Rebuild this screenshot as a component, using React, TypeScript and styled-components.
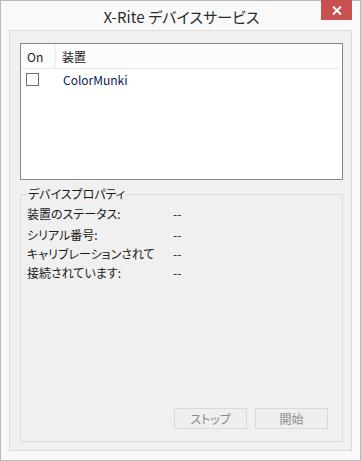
import React from "react";
import styled, { createGlobalStyle } from "styled-components";

const Global = createGlobalStyle`
  html, body { margin: 0; padding: 0; background: #ffffff; }
  body {
    font-family: "Noto Sans CJK JP", "Noto Sans", sans-serif;
    font-feature-settings: "palt";
  }
`;

const Window = styled.div`
  width: 361px;
  height: 461px;
  box-sizing: border-box;
  border: 1px solid #b9b9b9;
  background: #f9f9f9;
  display: flex;
  flex-direction: column;
  padding: 0 8px 9px 8px;
`;

const TitleBar = styled.div`
  height: 29px;
  display: grid;
  grid-template-columns: 1fr auto 1fr;
  align-items: start;
`;

const Title = styled.div`
  font-size: 15px;
  color: #2b2b2b;
  line-height: 30px;
  margin-top: 1px;
  padding-left: 2px;
  letter-spacing: 0.1px;
`;

const CloseButton = styled.div`
  justify-self: end;
  width: 31px;
  height: 20px;
  margin-top: -1px;
  background: #c75050;
  display: flex;
  align-items: center;
  justify-content: center;
`;

const Client = styled.div`
  flex: 1;
  border: 1px solid #d9d9d9;
  background: #f0f0f0;
  display: flex;
  flex-direction: column;
  padding: 12px 8px 8px 10px;
`;

const ListView = styled.div`
  height: 137px;
  box-sizing: border-box;
  border: 1px solid #85878c;
  background: #ffffff;
  display: flex;
  flex-direction: column;
`;

const HeaderRow = styled.div`
  height: 24px;
  display: flex;
  background: #fcfcfc;
  border-bottom: 1px solid #e6ecf6;
  margin-right: 2px;
  font-size: 12px;
  color: #1a1a1a;
`;

const HeaderCell = styled.div<{ $w?: number }>`
  ${(p) => (p.$w ? `width: ${p.$w}px;` : "flex: 1;")}
  box-sizing: border-box;
  padding-left: 6px;
  display: flex;
  align-items: center;
  ${(p) => (p.$w ? "border-right: 1px solid #e6ecf6;" : "")}
`;

const ItemRow = styled.div`
  height: 20px;
  display: flex;
  align-items: center;
  font-size: 12px;
  color: #0b1a5a;
`;

const CheckCell = styled.div`
  width: 35px;
  padding-left: 5px;
  box-sizing: border-box;
  display: flex;
  align-items: center;
`;

const CheckBox = styled.div`
  width: 13px;
  height: 13px;
  box-sizing: border-box;
  border: 1px solid #707070;
  background: #ffffff;
`;

const ItemText = styled.div`
  padding-left: 7px;
`;

const Group = styled.div`
  margin-top: 14px;
  flex: 1;
  position: relative;
  border: 1px solid #dcdcdc;
  display: flex;
  flex-direction: column;
  padding: 8px 6px 12px 6px;
`;

const GroupLabel = styled.div`
  position: absolute;
  top: -10px;
  left: 6px;
  padding: 0 1px;
  background: #f0f0f0;
  font-size: 12px;
  line-height: 18px;
  color: #1a1a1a;
`;

const PropRow = styled.div<{ $h: number }>`
  height: ${(p) => p.$h}px;
  display: flex;
  align-items: center;
  font-size: 12px;
  color: #1a1a1a;
`;

const PropLabel = styled.div`
  width: 146px;
`;

const Buttons = styled.div`
  margin-top: auto;
  display: flex;
  justify-content: flex-end;
  gap: 8px;
  padding-right: 8px;
`;

const Button = styled.div`
  width: 73px;
  height: 21px;
  box-sizing: border-box;
  border: 1px solid #d9d9d9;
  background: #efefef;
  color: #8a8a8a;
  font-size: 12px;
  display: flex;
  align-items: center;
  justify-content: center;
`;

const props = [
  { label: "装置のステータス:", h: 21 },
  { label: "シリアル番号:", h: 20 },
  { label: "キャリブレーションされて", h: 19 },
  { label: "接続されています:", h: 19 },
];

export default function App() {
  return (
    <>
      <Global />
      <Window>
        <TitleBar>
          <div />
          <Title>X-Rite デバイスサービス</Title>
          <CloseButton>
            <svg width="10" height="9" viewBox="0 0 10 9">
              <path d="M1 0.5 L9 8.5 M9 0.5 L1 8.5" stroke="#ffffff" strokeWidth="2" />
            </svg>
          </CloseButton>
        </TitleBar>
        <Client>
          <ListView>
            <HeaderRow>
              <HeaderCell $w={35}>On</HeaderCell>
              <HeaderCell>装置</HeaderCell>
            </HeaderRow>
            <ItemRow>
              <CheckCell>
                <CheckBox />
              </CheckCell>
              <ItemText>ColorMunki</ItemText>
            </ItemRow>
          </ListView>
          <Group>
            <GroupLabel>デバイスプロパティ</GroupLabel>
            {props.map((p) => (
              <PropRow key={p.label} $h={p.h}>
                <PropLabel>{p.label}</PropLabel>
                <div>--</div>
              </PropRow>
            ))}
            <Buttons>
              <Button>ストップ</Button>
              <Button>開始</Button>
            </Buttons>
          </Group>
        </Client>
      </Window>
    </>
  );
}
